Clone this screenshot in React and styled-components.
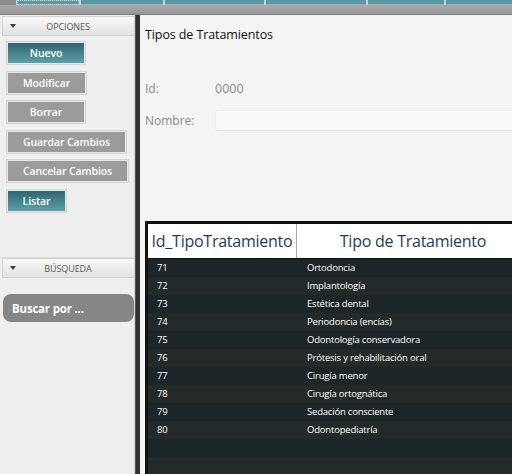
import React from 'react'
import styled, { createGlobalStyle } from 'styled-components';

const GlobalStyle = createGlobalStyle`
  html, body {
    margin: 0;
    padding: 0;
    overflow: hidden;
    background: #f4f4f4;
    font-family: "Open Sans", "Noto Sans", sans-serif;
  }
`;

const tabs = [62, 82, 99, 100, 76, 70];

const buttons = [
  { label: 'Nuevo', w: 80, teal: true },
  { label: 'Modificar', w: 81 },
  { label: 'Borrar', w: 80 },
  { label: 'Guardar Cambios', w: 121 },
  { label: 'Cancelar Cambios', w: 123 },
  { label: 'Listar', w: 61, teal: true },
];

const tratamientos = [
  [71, 'Ortodoncia'],
  [72, 'Implantología'],
  [73, 'Estética dental'],
  [74, 'Periodoncia (encías)'],
  [75, 'Odontología conservadora'],
  [76, 'Prótesis y rehabilitación oral'],
  [77, 'Cirugía menor'],
  [78, 'Cirugía ortognática'],
  [79, 'Sedación consciente'],
  [80, 'Odontopediatría'],
  ['', ''],
  ['', ''],
];

const App = () => {
  return (
    <>
      <GlobalStyle />
      <Screen>
        <TabStrip>
          {tabs.map((w, i) => (
            <Tab key={i} $w={w} $focused={i === 0} />
          ))}
        </TabStrip>
        <ToolBar />

        <Body>
          <Sidebar>
            <SectionHeader>
              <Arrow />
              <span>OPCIONES</span>
            </SectionHeader>
            <ButtonList>
              {buttons.map(b => (
                <SideButton key={b.label} $w={b.w} $teal={b.teal}>
                  {b.label}
                </SideButton>
              ))}
            </ButtonList>

            <SectionHeader>
              <Arrow />
              <span>BÚSQUEDA</span>
            </SectionHeader>
            <SearchArea>
              <SearchBox>Buscar por ...</SearchBox>
            </SearchArea>
          </Sidebar>

          <Divider />

          <Main>
            <Title>Tipos de Tratamientos</Title>

            <FormGrid>
              <Label>Id:</Label>
              <Value>0000</Value>
              <Label>Nombre:</Label>
              <TextField />
            </FormGrid>

            <Table>
              <HeaderRow>
                <HeaderCell $first>Id_TipoTratamiento</HeaderCell>
                <HeaderCell>Tipo de Tratamiento</HeaderCell>
              </HeaderRow>
              {tratamientos.map(([id, name], i) => (
                <Row key={i} $odd={i % 2 === 1}>
                  <Cell $first>{id}</Cell>
                  <Cell>{name}</Cell>
                </Row>
              ))}
            </Table>
          </Main>
        </Body>
      </Screen>
    </>
  )
}

const Screen = styled.div`
  width: 512px;
  height: 474px;
  display: flex;
  flex-direction: column;
  overflow: hidden;
`;

const TabStrip = styled.div`
  height: 5px;
  display: flex;
  gap: 2px;
  padding-left: 17px;
  background: #c9d2d4;
  box-shadow: inset 16px 0 0 #8c8c8c;
`;

const Tab = styled.div`
  width: ${p => p.$w}px;
  flex-shrink: 0;
  background: #5b97a3;
  border-bottom: 1px solid #8fb3ba;
  ${p => p.$focused && 'outline: 1px dotted #dfe9eb; outline-offset: -1px;'}
`;

const ToolBar = styled.div`
  height: 9px;
  background: linear-gradient(#a9a9a9, #979797);
  border-bottom: 1px solid #7e7e7e;
`;

const Body = styled.div`
  flex: 1;
  display: flex;
  min-height: 0;
`;

const Sidebar = styled.div`
  width: 134px;
  flex-shrink: 0;
  background: #efefef;
  border-right: 1px solid #d4d4d4;
  display: flex;
  flex-direction: column;
  padding-top: 1px;
`;

const SectionHeader = styled.div`
  height: 18px;
  margin-left: 2px;
  border: 1px solid #d2d2d2;
  border-right: none;
  background: linear-gradient(#f9f9f9, #e2e2e2);
  display: flex;
  align-items: center;
  padding-left: 7px;
  font-size: 9px;
  color: #5a5a5a;
  letter-spacing: -0.1px;

  span {
    flex: 1;
    text-align: center;
    padding-right: 14px;
  }
`;

const Arrow = styled.i`
  width: 0;
  height: 0;
  border-left: 3px solid transparent;
  border-right: 3px solid transparent;
  border-top: 4px solid #3c3c3c;
`;

const ButtonList = styled.div`
  display: flex;
  flex-direction: column;
  align-items: flex-start;
  gap: 5.6px;
  padding: 5px 0 0 6px;
  height: 222px;
  box-sizing: border-box;
  border-bottom: 1px solid #dcdcdc;
`;

const SideButton = styled.button`
  width: ${p => p.$w}px;
  height: 24px;
  flex-shrink: 0;
  border: 1px solid #d4d4d4;
  box-shadow: inset 0 0 0 1px #e9e9e9;
  padding: 0;
  background: ${p => p.$teal
    ? 'linear-gradient(#2c636d, #4f8f99 70%, #5fa3ad)'
    : '#9b9b9b'};
  color: #ffffff;
  font-family: "Open Sans", "Noto Sans", sans-serif;
  font-size: 10.5px;
  font-weight: 600;
  letter-spacing: -0.1px;
`;

const SearchArea = styled.div`
  padding: 16px 0 0 3px;
`;

const SearchBox = styled.div`
  height: 28px;
  border-radius: 8px;
  background: #868686;
  color: #ffffff;
  font-size: 11.5px;
  font-weight: 700;
  display: flex;
  align-items: center;
  padding-left: 9px;
  letter-spacing: -0.2px;
`;

const Divider = styled.div`
  width: 5px;
  flex-shrink: 0;
  background: #333333;
  border-left: 1px solid #555555;
  box-sizing: border-box;
`;

const Main = styled.div`
  flex: 1;
  min-width: 0;
  display: flex;
  flex-direction: column;
  padding: 12px 0 0 5px;
  overflow: hidden;
  background: #f4f4f4;
`;

const Title = styled.div`
  font-size: 12.5px;
  line-height: 16px;
  color: #111111;
  letter-spacing: -0.1px;
`;

const FormGrid = styled.div`
  display: grid;
  grid-template-columns: 70px 1fr;
  grid-auto-rows: 20px;
  row-gap: 12.5px;
  align-items: center;
  margin-top: 35px;
`;

const Label = styled.div`
  font-size: 12px;
  color: #8a8a8a;
`;

const Value = styled.div`
  font-size: 12.5px;
  color: #8a8a8a;
`;

const TextField = styled.div`
  height: 19px;
  background: #f9f9f9;
  border-top: 1px solid #ececec;
  border-bottom: 1px solid #dedede;
  border-left: 1px solid #ececec;
  border-radius: 3px 0 0 3px;
`;

const Table = styled.div`
  margin-top: 90px;
  flex: 1;
  width: 381px;
  flex-shrink: 0;
  background: #1c2527;
  border: 3px solid #0f1212;
  border-bottom: none;
  overflow: hidden;
`;

const HeaderRow = styled.div`
  display: grid;
  grid-template-columns: 149px 1fr;
  height: 34px;
  background: #ffffff;
  border-bottom: 1px solid #0f1212;
`;

const HeaderCell = styled.div`
  display: flex;
  align-items: center;
  justify-content: center;
  font-size: 16px;
  letter-spacing: -0.25px;
  color: #1d3d52;
  ${p => p.$first && 'border-right: 1px solid #a9a9a9;'}
`;

const Row = styled.div`
  display: grid;
  grid-template-columns: 149px 1fr;
  height: 18px;
  align-items: center;
  background: ${p => p.$odd ? '#232a27' : '#1c2527'};
`;

const Cell = styled.div`
  font-size: 9.5px;
  letter-spacing: -0.2px;
  color: #ffffff;
  padding-left: ${p => p.$first ? '9px' : '10px'};
  white-space: nowrap;
`;

export default App
